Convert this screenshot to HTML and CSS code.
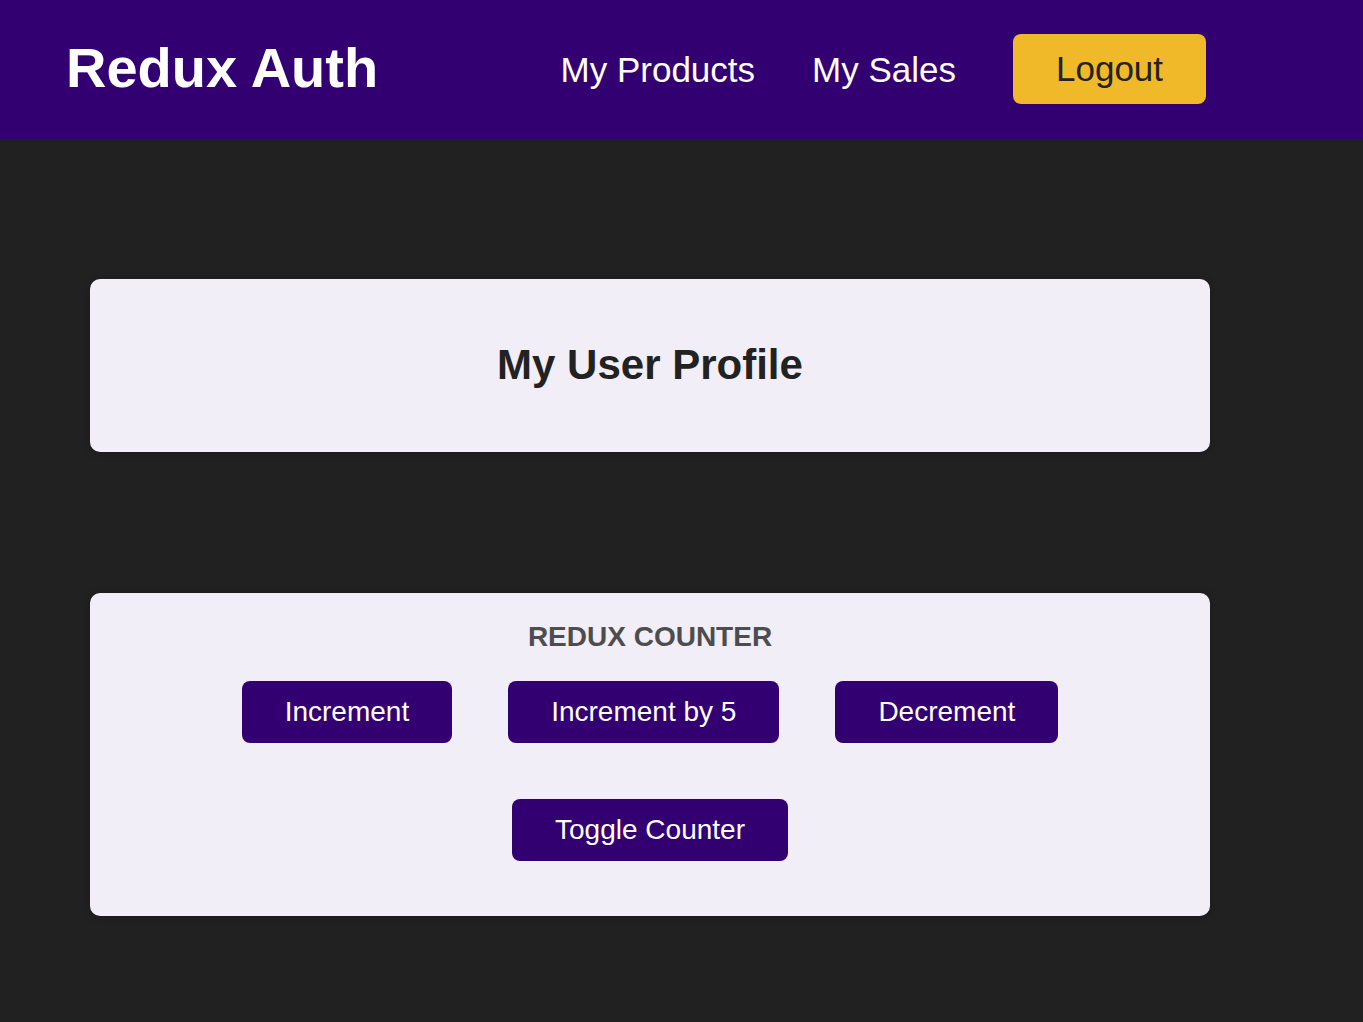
FILE: index.html
```html
<!DOCTYPE html>
<html lang="en">
<head>
<meta charset="utf-8">
<title>Redux Auth</title>
<link rel="stylesheet" href="styles.css">
</head>
<body>
<header class="header">
  <h1 class="logo">Redux Auth</h1>
  <nav class="nav">
    <a class="nav-link" href="#">My Products</a>
    <a class="nav-link" href="#">My Sales</a>
    <button class="logout">Logout</button>
  </nav>
</header>
<main class="main">
  <section class="card profile">
    <h2 class="profile-title">My User Profile</h2>
  </section>
  <section class="card counter">
    <h3 class="counter-title">REDUX COUNTER</h3>
    <div class="btn-row">
      <button class="btn">Increment</button>
      <button class="btn">Increment by 5</button>
      <button class="btn">Decrement</button>
    </div>
    <div class="btn-row">
      <button class="btn">Toggle Counter</button>
    </div>
  </section>
</main>
</body>
</html>
```

FILE: styles.css
```css
* { box-sizing: border-box; }
html, body { margin: 0; padding: 0; }
body {
  background: #212121;
  font-family: "Liberation Sans", Arial, Helvetica, sans-serif;
  min-height: 1022px;
}
.header {
  height: 139px;
  background: #330072;
  display: flex;
  align-items: center;
  justify-content: space-between;
  padding: 0 157px 0 66px;
}
.logo {
  margin: 0 0 4px 0;
  color: #fff;
  font-size: 56px;
  font-weight: bold;
  line-height: 64px;
}
.nav {
  display: flex;
  align-items: center;
  gap: 57px;
}
.nav-link {
  color: #fff;
  text-decoration: none;
  font-size: 35px;
  line-height: 40px;
}
.logout {
  font-family: inherit;
  font-size: 35px;
  line-height: 40px;
  color: #222;
  background: #f0b929;
  border: none;
  border-radius: 8px;
  padding: 15px 43px;
  width: 193px;
  height: 70px;
  margin-bottom: 1px;
  cursor: pointer;
}
.main {
  width: 1120px;
  margin: 140px 0 0 90px;
  display: flex;
  flex-direction: column;
  gap: 141px;
}
.card {
  background: #f1eef8;
  border-radius: 10px;
  box-shadow: 0 1px 8px rgba(0, 0, 0, 0.25);
  text-align: center;
}
.profile {
  padding: 62px 0 63px;
  height: 173px;
}
.profile-title {
  margin: 0;
  font-size: 42px;
  line-height: 48px;
  font-weight: bold;
  color: #222;
}
.counter {
  padding: 28px 0 55px;
  display: flex;
  flex-direction: column;
  align-items: center;
  gap: 28px;
}
.counter-title {
  margin: 0;
  font-size: 28px;
  line-height: 32px;
  font-weight: bold;
  color: #4d4d4d;
}
.btn-row {
  display: flex;
  justify-content: center;
  gap: 56px;
}
.counter .btn-row + .btn-row {
  margin-top: 28px;
}
.btn {
  font-family: inherit;
  font-size: 28px;
  line-height: 34px;
  color: #fff;
  background: #330072;
  border: none;
  border-radius: 8px;
  padding: 14px 43px;
  cursor: pointer;
}
```
